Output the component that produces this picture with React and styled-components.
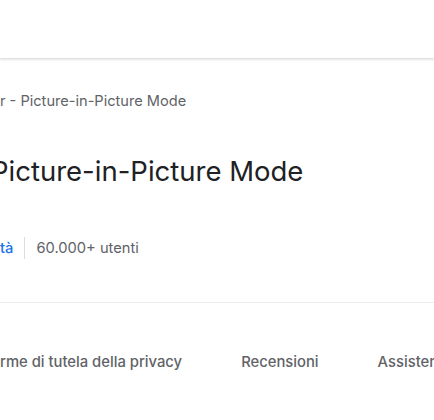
import React from "react";
import styled, { createGlobalStyle } from "styled-components";

const Global = createGlobalStyle`
  html, body { margin: 0; padding: 0; background: #fff; }
  body { width: 434px; height: 420px; overflow: hidden; font-family: Inter, "Open Sans", sans-serif; }
`;

const Page = styled.div`
  width: 434px;
  height: 420px;
  overflow: hidden;
  display: flex;
  flex-direction: column;
`;

const Header = styled.header`
  height: 58px;
  flex-shrink: 0;
  background: #fff;
  box-shadow: 0 1px 2px rgba(60, 64, 67, 0.15), 0 1px 3px 1px rgba(60, 64, 67, 0.08);
  position: relative;
  z-index: 1;
`;

const Main = styled.main`
  display: flex;
  flex-direction: column;
`;

const Crumb = styled.div`
  margin-top: 33px;
  height: 20px;
  font-size: 14.6px;
  line-height: 20px;
  color: #5f6368;
  white-space: nowrap;
`;

const Title = styled.h1`
  margin: 42px 0 0 ${(p) => p.$shift}px;
  font-size: 27.5px;
  font-weight: 400;
  line-height: 36px;
  color: #202124;
  white-space: nowrap;
`;

const Meta = styled.div`
  margin-top: 48px;
  display: flex;
  align-items: center;
  height: 22px;
  font-size: 14.7px;
  color: #5f6368;
  white-space: nowrap;
`;

const Link = styled.span`
  color: #1a73e8;
  font-weight: 500;
`;

const Divider = styled.span`
  width: 1px;
  height: 22px;
  background: #dadce0;
  margin: 0 11px;
`;

const Rule = styled.div`
  margin-top: 43px;
  height: 1px;
  background: #ebedef;
`;

const Tabs = styled.nav`
  margin-top: 49px;
  display: flex;
  gap: 59px;
  font-size: 14.8px;
  font-weight: 500;
  line-height: 20px;
  color: #5f6368;
  white-space: nowrap;
`;

export default function App() {
  return (
    <>
      <Global />
      <Page>
        <Header />
        <Main>
          <Crumb>r - Picture-in-Picture Mode</Crumb>
          <Title $shift={-9}>Picture-in-Picture Mode</Title>
          <Meta>
            <Link>tà</Link>
            <Divider />
            <span>60.000+ utenti</span>
          </Meta>
          <Rule />
          <Tabs>
            <span>rme di tutela della privacy</span>
            <span>Recensioni</span>
            <span>Assistenza</span>
          </Tabs>
        </Main>
      </Page>
    </>
  );
}
